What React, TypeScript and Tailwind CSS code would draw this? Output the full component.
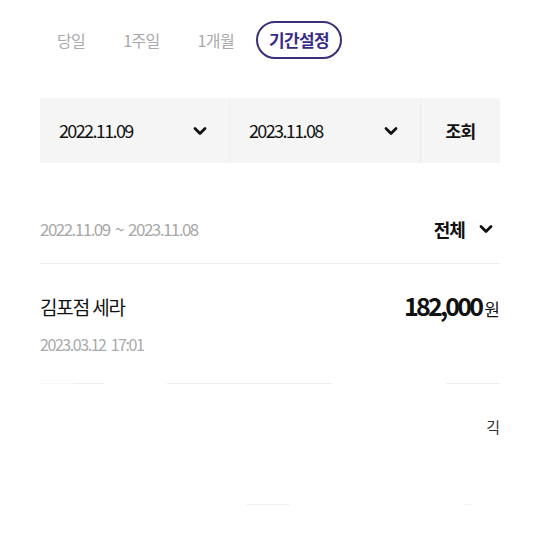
import React from "react";

const FONT = "font-['Noto_Sans_CJK_KR','Noto_Sans',sans-serif]";

function Chevron({ className = "" }: { className?: string }) {
  return (
    <svg width="14" height="10" viewBox="0 0 14 10" className={className}>
      <path d="M2 2.5 L7 7.5 L12 2.5" fill="none" stroke="#111" strokeWidth="2.8" strokeLinecap="round" strokeLinejoin="round" />
    </svg>
  );
}

export default function App() {
  return (
    <div className={`w-[540px] h-[540px] bg-white overflow-hidden text-[#111] ${FONT}`}>
      {/* tabs */}
      <div className="flex items-center pt-[21px] pl-[38px]">
        <div className="h-[37px] px-[19px] flex items-center text-[16px] text-[#a9a9a9] tracking-[-0.04em]">당일</div>
        <div className="h-[37px] px-[19px] flex items-center text-[16px] text-[#a9a9a9] tracking-[-0.04em]">1주일</div>
        <div className="h-[37px] px-[19px] flex items-center text-[16px] text-[#a9a9a9] tracking-[-0.04em]">1개월</div>
        <div className="h-[38px] w-[86px] ml-[3px] rounded-full border-2 border-[#3b3078] flex items-center justify-center text-[17px] font-bold text-[#3a2b8a] tracking-[-0.04em]">
          기간설정
        </div>
      </div>

      {/* date box */}
      <div className="mx-[40px] mt-[39px] h-[65px] bg-[#f5f5f5] flex">
        <div className="w-[190px] flex items-center justify-between pl-[19px] pr-[22px] border-r border-[#f0f0f0]">
          <span className="text-[18px] tracking-[-0.09em]">2022.11.09</span>
          <Chevron />
        </div>
        <div className="w-[191px] flex items-center justify-between pl-[19px] pr-[22px] border-r border-[#ededed]">
          <span className="text-[18px] tracking-[-0.09em]">2023.11.08</span>
          <Chevron />
        </div>
        <div className="flex-1 flex items-center justify-center text-[17px] font-bold tracking-[-0.04em]">조회</div>
      </div>

      {/* filter row */}
      <div className="mx-[40px] mt-[42px] h-[48px] flex items-center justify-between">
        <span className="text-[17px] text-[#a8a8a8] tracking-[-0.09em] [word-spacing:3px]">2022.11.09 ~ 2023.11.08</span>
        <div className="flex items-center gap-[14px] pr-[7px]">
          <span className="text-[18px] font-bold tracking-[-0.05em]">전체</span>
          <Chevron />
        </div>
      </div>
      <div className="mx-[40px] mt-[10px] h-px bg-[#eeeeee]" />

      {/* item */}
      <div className="mx-[40px] pt-[31px]">
        <div className="flex items-center justify-between h-[24px]">
          <span className="text-[19px] tracking-[-0.06em]">김포점 세라</span>
          <div className="flex items-baseline gap-[3px]">
            <span className="text-[25px] font-bold leading-none tracking-[-0.11em]">182,000</span>
            <span className="text-[17px]">원</span>
          </div>
        </div>
        <div className="mt-[15px] h-[20px] flex items-center text-[16px] text-[#aaaaaa] tracking-[-0.09em] [word-spacing:3px]">2023.03.12 17:01</div>
      </div>

      {/* broken divider */}
      <div className="mx-[40px] mt-[29px] flex h-px">
        <div className="w-[34px] bg-[#f6f6f6]" />
        <div className="w-[30px] bg-[#eeeeee]" />
        <div className="w-[64px]" />
        <div className="w-[165px] bg-[#eeeeee]" />
        <div className="w-[115px]" />
        <div className="w-[54px] bg-[#eeeeee]" />
      </div>

      <div className="mx-[40px] mt-[35px] flex justify-end">
        <span className="text-[15px] leading-none text-[#333]">긱</span>
      </div>

      <div className="mx-[40px] mt-[70px] flex h-px">
        <div className="w-[206px]" />
        <div className="w-[44px] bg-[#f2f2f2]" />
        <div className="w-[175px]" />
        <div className="w-[8px] bg-[#f2f2f2]" />
      </div>
    </div>
  );
}
